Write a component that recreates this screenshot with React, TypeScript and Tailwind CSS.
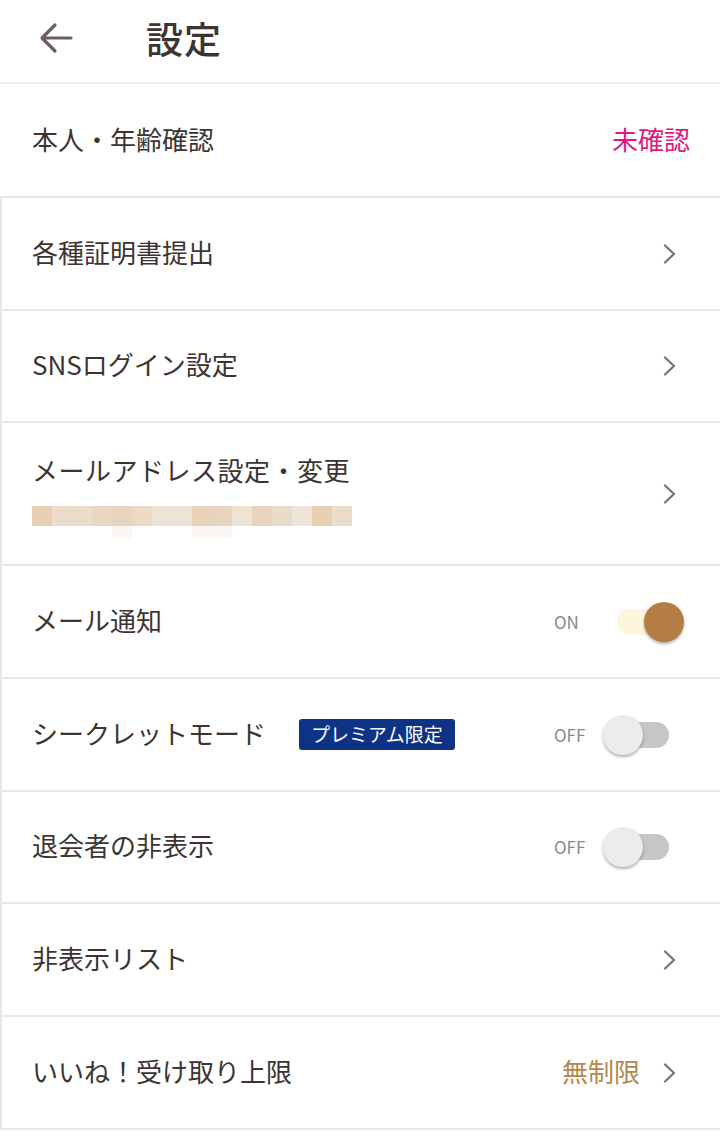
import React from 'react';

const font = { fontFamily: '"Noto Sans CJK JP", "Noto Sans", sans-serif' };

function Chevron() {
  return (
    <svg width="24" height="24" viewBox="0 0 24 24" className="mr-[39px]">
      <path d="M8 3.5 L17 12 L8 20.5" fill="none" stroke="#7c7679" strokeWidth="2.4" strokeLinecap="round" strokeLinejoin="round" />
    </svg>
  );
}

function Switch({ on }: { on: boolean }) {
  return (
    <div className="flex items-center mr-[36px]">
      <span className="w-[49px] text-[17px] text-[#8c8888]">{on ? 'ON' : 'OFF'}</span>
      <div className="relative w-[81px] h-[40px]">
        <div className={`absolute left-[14px] top-[7px] w-[52px] h-[26px] rounded-full ${on ? 'bg-[#fdf5dc]' : 'bg-[#c6c6c6]'}`} />
        <div
          className={`absolute top-0 w-[40px] h-[40px] rounded-full shadow-[0_2px_3px_rgba(0,0,0,0.3)] ${on ? 'left-[41px] bg-[#b47d44]' : 'left-0 bg-[#ececec]'}`}
        />
      </div>
    </div>
  );
}

const blocks = [
  '#e6cfb3', '#ecdccb', '#ecdccc', '#e8d6c0', '#e8d4bf', '#ead9c4', '#eee3d7', '#eee3d6',
  '#e8d3ba', '#e8d4bc', '#eee3d5', '#e9d5be', '#eadac8', '#eee4d8', '#e6cfb2', '#ebdccb',
];

export default function App() {
  const rowCls = 'flex items-center justify-between border-b-2 border-[#e8e8e8] bg-white';
  const label = 'ml-[30px] pb-[4px] text-[26px] leading-none';

  return (
    <div className="w-[720px] h-[1136px] bg-white text-[#3d3431] overflow-hidden" style={font}>
      {/* header */}
      <div className="flex items-center h-[84px] border-b-2 border-[#ececec]">
        <svg width="36" height="36" viewBox="0 0 36 36" className="ml-[38px] mb-[6px]">
          <path d="M33 18 H5 M17 5 L4 18 L17 31" fill="none" stroke="#6b5f5d" strokeWidth="3.2" strokeLinecap="round" strokeLinejoin="round" />
        </svg>
        <h1 className="ml-[72px] mb-[4px] text-[37px] font-medium tracking-[1px]">設定</h1>
      </div>

      <div className={`${rowCls} h-[114px]`}>
        <span className="ml-[32px] pb-[2px] text-[26px] leading-none">本人・年齢確認</span>
        <span className="mr-[30px] pb-[2px] text-[26px] leading-none text-[#e0197f]">未確認</span>
      </div>

      <div className="border-l-2 border-[#e8e8e8]">
        <div className={`${rowCls} h-[113px]`}>
          <span className={label}>各種証明書提出</span>
          <Chevron />
        </div>
        <div className={`${rowCls} h-[112px]`}>
          <span className={label}>SNSログイン設定</span>
          <Chevron />
        </div>
        <div className={`${rowCls} h-[143px]`}>
          <div className="ml-[30px] pb-[4px] flex flex-col">
            <span className="text-[26px] leading-none tracking-[0.5px]">メールアドレス設定・変更</span>
            <div className="relative mt-[23px] h-[20px] flex">
              {blocks.map((c, i) => (
                <div key={i} className="w-[20px] h-[20px]" style={{ backgroundColor: c }} />
              ))}
              <div className="absolute left-[80px] top-[20px] w-[20px] h-[12px] bg-[#faf7f2]" />
              <div className="absolute left-[160px] top-[20px] w-[40px] h-[12px] bg-[#faf6f1]" />
            </div>
          </div>
          <Chevron />
        </div>
        <div className={`${rowCls} h-[113px]`}>
          <span className={label}>メール通知</span>
          <Switch on />
        </div>
        <div className={`${rowCls} h-[113px]`}>
          <div className="ml-[30px] flex items-center">
            <span className="pb-[4px] text-[26px] leading-none">シークレットモード</span>
            <span className="ml-[33px] px-[12px] h-[31px] flex items-center rounded-[3px] bg-[#0e3285] text-white text-[19px]">
              プレミアム限定
            </span>
          </div>
          <Switch on={false} />
        </div>
        <div className={`${rowCls} h-[112px]`}>
          <span className={label}>退会者の非表示</span>
          <Switch on={false} />
        </div>
        <div className={`${rowCls} h-[113px]`}>
          <span className={label}>非表示リスト</span>
          <Chevron />
        </div>
        <div className={`${rowCls} h-[113px]`}>
          <span className={label}>いいね！受け取り上限</span>
          <div className="flex items-center">
            <span className="pb-[4px] text-[26px] leading-none text-[#b5874c] mr-[17px]">無制限</span>
            <Chevron />
          </div>
        </div>
      </div>
    </div>
  );
}
